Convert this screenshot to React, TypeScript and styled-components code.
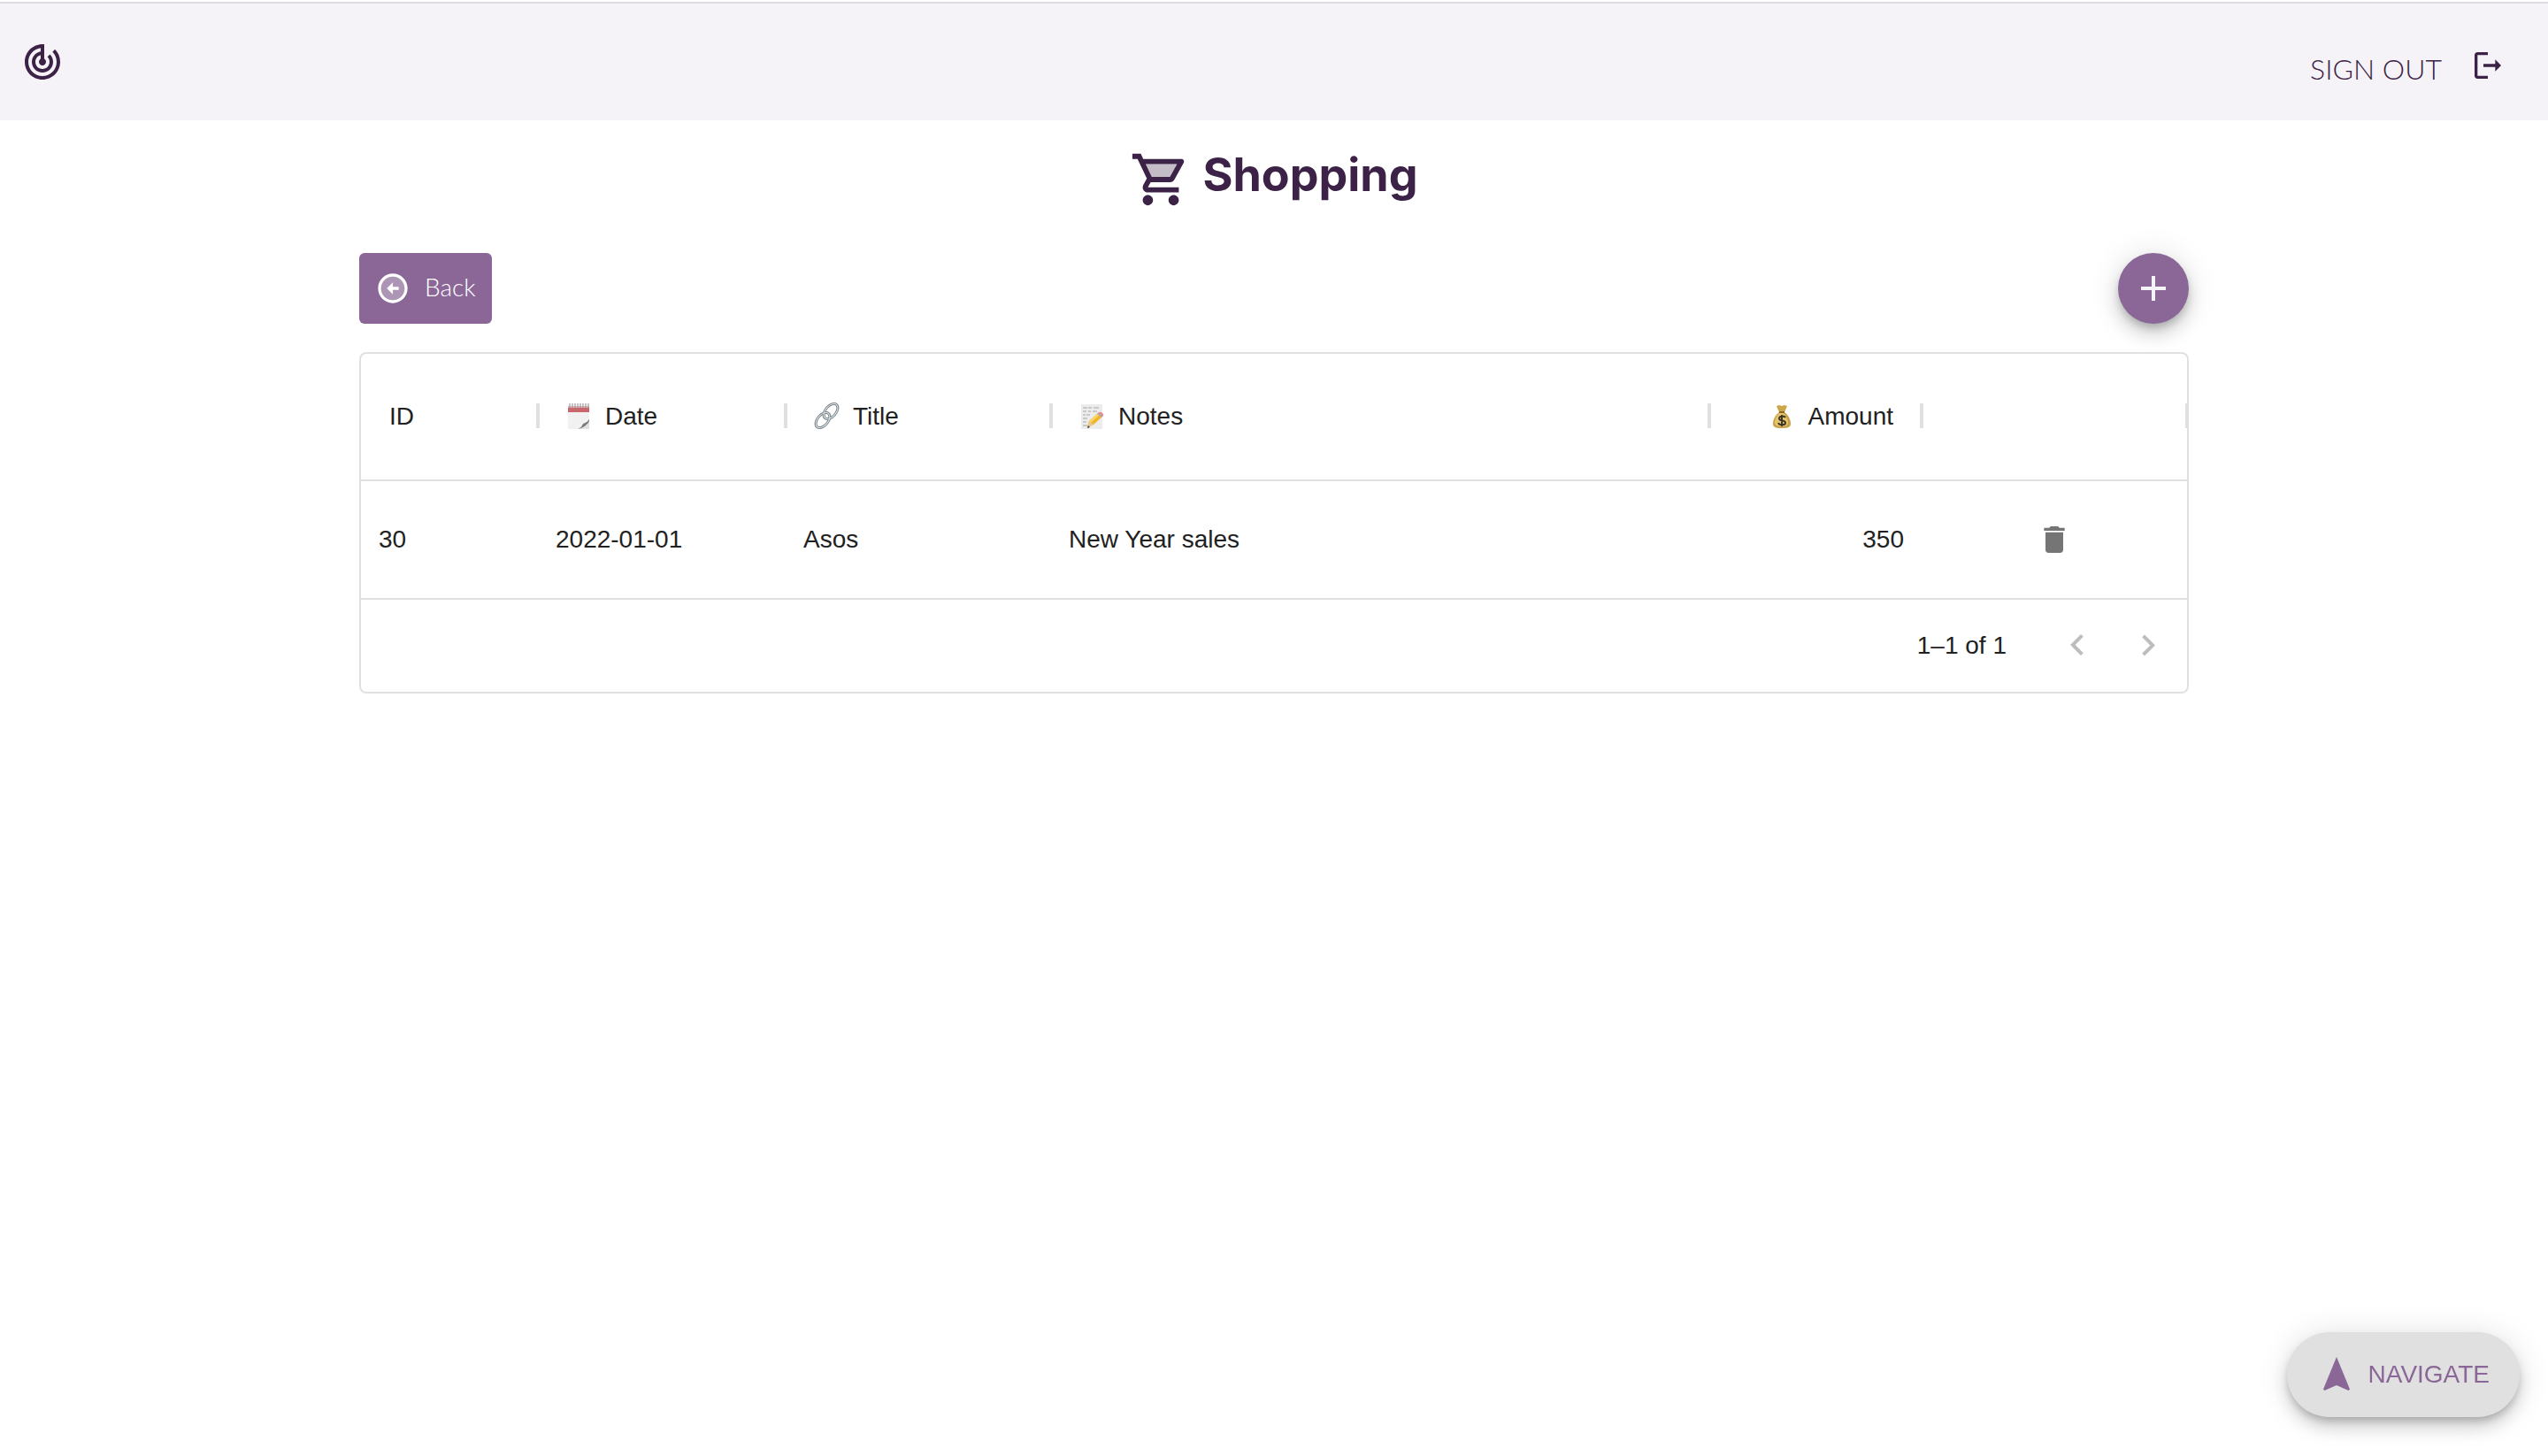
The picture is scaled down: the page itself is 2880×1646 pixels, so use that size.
import React from "react";
import styled, { createGlobalStyle } from "styled-components";

const color = {
  ink: "#3c2246",
  purple: "#8a6797",
  bar: "#f5f3f7",
  line: "#e0e0e0",
  text: "#212121",
};
const sans = `"Liberation Sans", Arial, Helvetica, sans-serif`;
const display = `Lato, "Open Sans", sans-serif`;
const heading = `Inter, "Open Sans", sans-serif`;
const lifted =
  "0 6px 10px -2px rgba(0,0,0,.2), 0 12px 20px rgba(0,0,0,.14), 0 2px 36px rgba(0,0,0,.12)";

const GlobalStyle = createGlobalStyle`
  *, *::before, *::after { box-sizing: border-box; }
  body { margin: 0; background: #fff; color: ${color.text}; font-family: ${sans}; font-size: 28px; }
  button { border: 0; padding: 0; background: none; font: inherit; color: inherit; cursor: pointer; }
`;

const Icon = styled.svg.attrs({ viewBox: "0 0 24 24", "aria-hidden": true })<{ $size: number }>`
  display: block;
  flex: none;
  width: ${(p) => p.$size}px;
  height: ${(p) => p.$size}px;
  fill: currentColor;
`;

const TopBar = styled.header`
  display: flex;
  justify-content: space-between;
  align-items: center;
  margin-top: 2px;
  height: 134px;
  padding: 0 48px 0 24px;
  border-top: 2px solid #dddbe1;
  background: ${color.bar};
  color: ${color.ink};
`;

const HomeLink = styled.a`
  color: inherit;
`;

const SignOut = styled.button`
  display: flex;
  align-items: flex-end;
  gap: 32px;
  padding-top: 8px;
  font-family: ${display};
  font-size: 32px;
  font-weight: 300;
  line-height: 32px;
`;

const Page = styled.main`
  width: min(100% - 64px, 2068px);
  margin: 0 auto;
  padding: 32px 0 160px;
`;

const Title = styled.h1`
  display: flex;
  justify-content: center;
  align-items: flex-start;
  gap: 12px;
  margin: 0 0 48px;
  color: ${color.ink};
  font-family: ${heading};
  font-size: 52px;
  font-weight: 700;
  line-height: 60px;
`;

const Toolbar = styled.div`
  display: flex;
  justify-content: space-between;
  margin-bottom: 32px;
`;

const BackButton = styled.button`
  display: flex;
  align-items: flex-start;
  gap: 16px;
  height: 80px;
  padding: 20px 18px;
  border-radius: 6px;
  background: ${color.purple};
  color: #fff;
  font-family: ${display};
  font-size: 28px;
  font-weight: 300;
  line-height: 36px;
`;

const AddButton = styled.button`
  display: grid;
  place-items: center;
  width: 80px;
  height: 80px;
  border-radius: 50%;
  background: ${color.purple};
  color: ${color.bar};
  box-shadow: ${lifted};
`;

const Panel = styled.section`
  overflow: hidden;
  border: 2px solid ${color.line};
  border-radius: 8px;
`;

const Grid = styled.table`
  width: 100%;
  table-layout: fixed;
  border-collapse: separate;
  border-spacing: 0;
`;

const Column = styled.col<{ $width?: number }>`
  width: ${(p) => (p.$width ? `${p.$width}px` : "auto")};
`;

const HeadCell = styled.th`
  position: relative;
  height: 144px;
  padding: 0 32px;
  border-bottom: 2px solid ${color.line};
  font-weight: 400;
  text-align: left;

  &::after {
    content: "";
    position: absolute;
    top: 56px;
    right: -2px;
    width: 4px;
    height: 28px;
    background: ${color.line};
  }
`;

const HeadLabel = styled.span<{ $end?: boolean }>`
  display: flex;
  align-items: center;
  justify-content: ${(p) => (p.$end ? "flex-end" : "flex-start")};
  gap: 16px;
  line-height: 32px;
`;

const Picture = styled.svg.attrs({ viewBox: "0 0 28 28", "aria-hidden": true })`
  flex: none;
  width: 28px;
  height: 28px;
  overflow: visible;
`;

const Cell = styled.td<{ $align?: "left" | "right" }>`
  height: 134px;
  padding: 0 20px;
  border-bottom: 2px solid ${color.line};
  text-align: ${(p) => p.$align ?? "left"};
  line-height: 32px;
`;

const DeleteButton = styled.button`
  display: block;
  margin: 0 auto;
  padding: 16px;
  color: #757575;
`;

const Pager = styled.footer`
  display: flex;
  justify-content: flex-end;
  align-items: center;
  height: 104px;
  padding-right: 4px;
`;

const Range = styled.span`
  margin-right: 40px;
  line-height: 32px;
`;

const PageButton = styled.button`
  padding: 16px;
  color: #bdbdbd;
`;

const NavigateButton = styled.button`
  position: fixed;
  right: 32px;
  bottom: 44px;
  display: flex;
  align-items: center;
  gap: 12px;
  height: 96px;
  padding: 0 34px 0 32px;
  border-radius: 48px;
  background: ${color.line};
  color: ${color.purple};
  box-shadow: ${lifted};
`;

const CalendarPicture = () => (
  <Picture>
    <path d="M2 3h24v25H2z" fill="#f1f1f2" />
    <path d="M2 3h24v6H2z" fill="#c9686c" />
    <path d="M2 2h24v2H2z" fill="#e3bcbe" />
    <path d="M4 -1v5M7 -1v5M10 -1v5M13 -1v5M16 -1v5M19 -1v5M22 -1v5M25 -1v5" stroke="#8d8587" strokeWidth="1" />
    <path d="M26 17v11H13c4-1 6-3 7-5 2-1 4-3 6-6z" fill="#dfe0e2" />
    <path d="M26 17c-2 3-4 4-7 5-1 3-3 5-6 6 6-1 11-5 13-9z" fill="#77797c" />
  </Picture>
);

const LinkPicture = () => (
  <Picture fill="none">
    <g strokeWidth="3" stroke="#7b858c">
      <ellipse cx="10" cy="18" rx="10" ry="6" transform="rotate(-50 10 18)" />
      <ellipse cx="19" cy="8" rx="10" ry="6" transform="rotate(-50 19 8)" />
    </g>
    <g strokeWidth="1" stroke="#e2e7ea">
      <ellipse cx="10" cy="18" rx="10" ry="6" transform="rotate(-50 10 18)" />
      <ellipse cx="19" cy="8" rx="10" ry="6" transform="rotate(-50 19 8)" />
    </g>
  </Picture>
);

const MemoPicture = () => (
  <Picture>
    <path d="M2 0h24v28H2z" fill="#ececec" />
    <path
      d="M4 4h5m1 0h4m2 0h6M4 8h4m2 0h3m2 0h5M4 12h3m1 0h4M4 16h5M4 20h4M4 24h5"
      stroke="#a5a5a5"
      strokeWidth="1"
    />
    <path d="M9 26l2-7L21 10l5 4-10 9z" fill="#eeb52d" />
    <path d="M11 19L21 10l2 2-10 9z" fill="#fbd55c" />
    <path d="M9 26l2-7 5 4z" fill="#e6c893" />
    <path d="M9 27l1-3 2 2z" fill="#39332d" />
    <path d="M20 11l2-2 5 4-2 2z" fill="#a9afb3" />
    <path d="M21 10c2-2 4-1 5 0s2 2 0 4z" fill="#e78d98" />
  </Picture>
);

const MoneyPicture = () => (
  <Picture>
    <path d="M8 2l3-1 3 1 3-1 3 1-3 7h-6z" fill="#cda64b" />
    <path d="M11 9h6c4 3 7 8 7 13 0 4-3 5-10 5S4 26 4 22c0-5 3-10 7-13z" fill="#c9a048" />
    <path d="M11 10h5c3 3 5 7 5 11 0 3-3 4-7 4s-8-1-8-4c0-4 2-8 5-11z" fill="#e5c56d" />
    <path d="M11 8h6v2h-6z" fill="#8e6727" />
    <path
      d="M18 15c-1-2-7-2-7 1 0 4 7 1 7 5 0 3-7 3-8 0M14 12v13"
      fill="none"
      stroke="#3d3625"
      strokeWidth="2"
    />
  </Picture>
);

const columns = [
  { label: "ID", width: 200 },
  { label: "Date", width: 280, picture: <CalendarPicture /> },
  { label: "Title", width: 300, picture: <LinkPicture /> },
  { label: "Notes", picture: <MemoPicture /> },
  { label: "Amount", width: 240, picture: <MoneyPicture />, end: true },
  { label: "", width: 300 },
];

const rows = [{ id: 30, date: "2022-01-01", title: "Asos", notes: "New Year sales", amount: 350 }];

export default function App() {
  return (
    <>
      <GlobalStyle />
      <TopBar>
        <HomeLink href="#" aria-label="Home">
          <Icon $size={48}>
            <path d="M19.07 4.93l-1.41 1.41C19.1 7.79 20 9.79 20 12c0 4.42-3.58 8-8 8s-8-3.58-8-8c0-4.08 3.05-7.44 7-7.93v2.02C8.16 6.57 6 9.03 6 12c0 3.31 2.69 6 6 6s6-2.69 6-6c0-1.66-.67-3.16-1.76-4.24l-1.41 1.41C15.55 9.9 16 10.9 16 12c0 2.21-1.79 4-4 4s-4-1.79-4-4c0-1.86 1.28-3.41 3-3.86v2.14c-.6.35-1 .98-1 1.72 0 1.1.9 2 2 2s2-.9 2-2c0-.74-.4-1.38-1-1.72V2h-1C6.48 2 2 6.48 2 12s4.48 10 10 10 10-4.48 10-10c0-2.76-1.12-5.26-2.93-7.07z" />
          </Icon>
        </HomeLink>
        <SignOut type="button">
          SIGN OUT
          <Icon $size={40}>
            <path d="M5 5h7V3H5c-1.1 0-2 .9-2 2v14c0 1.1.9 2 2 2h7v-2H5V5z" />
            <path d="M17 8v3H9v2h8v3l4-4z" />
          </Icon>
        </SignOut>
      </TopBar>

      <Page>
        <Title>
          <Icon $size={70}>
            <path d="M15.55 11l2.76-5H6.16l2.37 5z" opacity=".3" />
            <path d="M15.55 13c.75 0 1.41-.41 1.75-1.03l3.58-6.49c.37-.66-.11-1.48-.87-1.48H5.21l-.94-2H1v2h2l3.6 7.59-1.35 2.44C4.52 15.37 5.48 17 7 17h12v-2H7l1.1-2h7.45zM6.16 6h12.15l-2.76 5H8.53L6.16 6zM7 18c-1.1 0-1.99.9-1.99 2S5.9 22 7 22s2-.9 2-2-.9-2-2-2zm10 0c-1.1 0-1.99.9-1.99 2s.89 2 1.99 2 2-.9 2-2-.9-2-2-2z" />
          </Icon>
          Shopping
        </Title>

        <Toolbar>
          <BackButton type="button">
            <Icon $size={40}>
              <path d="M12 4c-4.41 0-8 3.59-8 8s3.59 8 8 8 8-3.59 8-8-3.59-8-8-8z" opacity=".3" />
              <path d="M12 20c-4.41 0-8-3.59-8-8s3.59-8 8-8 8 3.59 8 8-3.59 8-8 8m0 2c5.52 0 10-4.48 10-10S17.52 2 12 2 2 6.48 2 12s4.48 10 10 10zm-4-10l4-4v3h4v2h-4v3l-4-4z" />
            </Icon>
            Back
          </BackButton>
          <AddButton type="button" aria-label="Add">
            <Icon $size={48}>
              <path d="M19 13h-6v6h-2v-6H5v-2h6V5h2v6h6v2z" />
            </Icon>
          </AddButton>
        </Toolbar>

        <Panel>
          <Grid>
            <colgroup>
              {columns.map((c, i) => (
                <Column key={i} $width={c.width} />
              ))}
            </colgroup>
            <thead>
              <tr>
                {columns.map((c, i) => (
                  <HeadCell key={i} scope="col">
                    <HeadLabel $end={c.end}>
                      {c.picture}
                      {c.label}
                    </HeadLabel>
                  </HeadCell>
                ))}
              </tr>
            </thead>
            <tbody>
              {rows.map((r) => (
                <tr key={r.id}>
                  <Cell>{r.id}</Cell>
                  <Cell>{r.date}</Cell>
                  <Cell>{r.title}</Cell>
                  <Cell>{r.notes}</Cell>
                  <Cell $align="right">{r.amount}</Cell>
                  <Cell>
                    <DeleteButton type="button" aria-label="Delete">
                      <Icon $size={40}>
                        <path d="M6 19c0 1.1.9 2 2 2h8c1.1 0 2-.9 2-2V7H6v12zM19 4h-3.5l-1-1h-5l-1 1H5v2h14V4z" />
                      </Icon>
                    </DeleteButton>
                  </Cell>
                </tr>
              ))}
            </tbody>
          </Grid>
          <Pager>
            <Range>1–1 of 1</Range>
            <PageButton type="button" disabled aria-label="Previous page">
              <Icon $size={48}>
                <path d="M15.41 16.09l-4.58-4.59 4.58-4.59L14 5.5l-6 6 6 6z" />
              </Icon>
            </PageButton>
            <PageButton type="button" disabled aria-label="Next page">
              <Icon $size={48}>
                <path d="M8.59 16.34l4.58-4.59-4.58-4.59L10 5.75l6 6-6 6z" />
              </Icon>
            </PageButton>
          </Pager>
        </Panel>
      </Page>

      <NavigateButton type="button">
        <Icon $size={48}>
          <path d="M12 2L4.5 20.29l.71.71L12 18l6.79 3 .71-.71z" />
        </Icon>
        NAVIGATE
      </NavigateButton>
    </>
  );
}
